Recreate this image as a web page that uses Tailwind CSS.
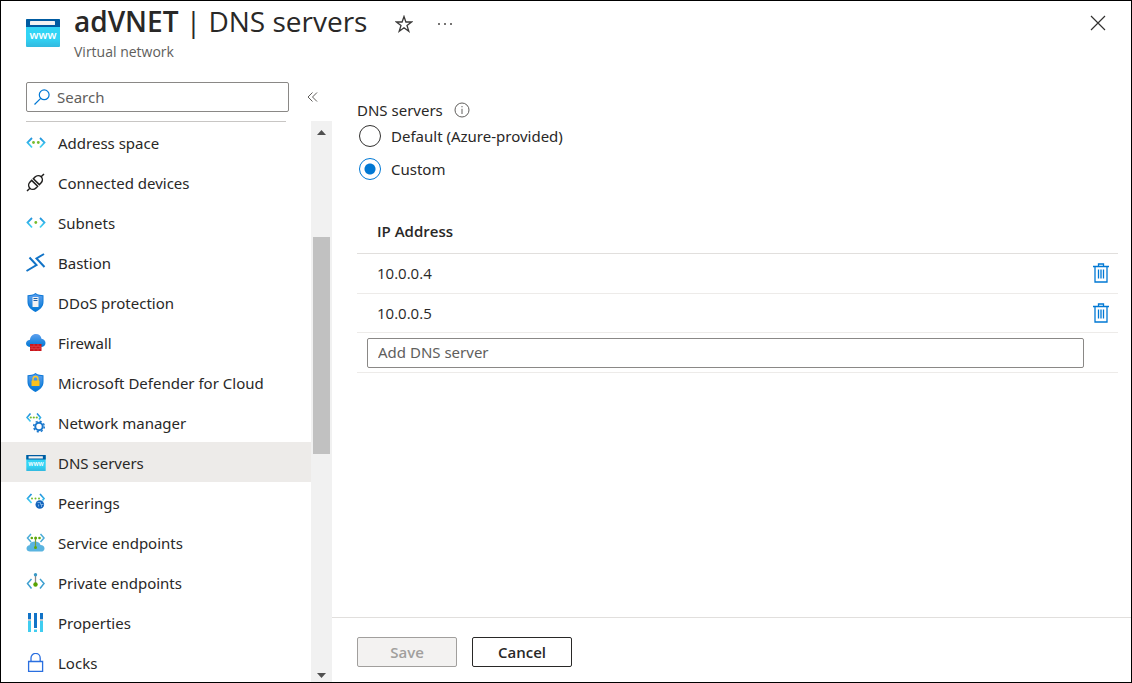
<!DOCTYPE html>
<html lang="en">
<head>
<meta charset="utf-8">
<meta name="viewport" content="width=device-width, initial-scale=1">
<title>adVNET | DNS servers</title>
<script src="https://cdn.jsdelivr.net/npm/@tailwindcss/browser@4"></script>
</head>
<body class="flex h-screen flex-col overflow-hidden border border-black bg-white font-['Noto_Sans','Open_Sans',sans-serif] text-[15px] leading-5 text-[#292827]">
<svg class="absolute size-0" aria-hidden="true">
  <defs>
    <linearGradient id="cy" gradientUnits="userSpaceOnUse" x1="0" y1="3" x2="0" y2="16"><stop offset="0" stop-color="#1b86d8"/><stop offset="1" stop-color="#4be0f8"/></linearGradient>
    <linearGradient id="cySmall" gradientUnits="userSpaceOnUse" x1="0" y1="0" x2="0" y2="11"><stop offset="0" stop-color="#1b86d8"/><stop offset="1" stop-color="#4be0f8"/></linearGradient>
    <linearGradient id="page" x1="0" y1="0" x2="0" y2="1"><stop offset="0" stop-color="#32d4f5"/><stop offset=".7" stop-color="#32d4f5"/><stop offset="1" stop-color="#32b9df"/></linearGradient>
    <linearGradient id="bl" x1="0" y1="0" x2="0" y2="1"><stop offset="0" stop-color="#5ea0ef"/><stop offset="1" stop-color="#0078d4"/></linearGradient>
    <symbol id="www" viewBox="0 0 34 28">
      <rect width="34" height="28" rx="1" fill="url(#page)"/>
      <path d="M1 0h32a1 1 0 0 1 1 1v7H0V1a1 1 0 0 1 1-1z" fill="#005ba1"/>
      <rect x="4" y="2" width="25" height="4" rx=".5" fill="#f2f2f2"/>
      <text x="17" y="20" text-anchor="middle" font-family="Open Sans, sans-serif" font-size="11" font-weight="600" fill="#fff">www</text>
    </symbol>
    <symbol id="trash" viewBox="0 0 16 20">
      <path d="M0 3.500h16M5.500 3V1h5v2M2 4v15h12V4M5.500 6.500v9M8 6.500v9M10.500 6.500v9" fill="none" stroke="#0078d4" stroke-width="1.300"/>
    </symbol>
  </defs>
</svg>

<header class="flex h-[81px] shrink-0 items-start pl-[25px] pr-[25px]">
  <svg class="mt-[18px] h-7 w-[34px] shrink-0" aria-hidden="true"><use href="#www"/></svg>
  <div class="ml-[14px]">
    <h1 class="pt-[2px] font-['Open_Sans',sans-serif] text-[28px] leading-9 whitespace-nowrap"><span class="font-semibold">adVNET</span> | DNS servers</h1>
    <p class="mt-[3px] font-['Open_Sans',sans-serif] text-sm leading-5 text-[#605e5c]">Virtual network</p>
  </div>
  <button class="mt-[14px] ml-7" aria-label="Add to favorites">
    <svg class="size-[18px]" viewBox="0 0 18 18" fill="none" stroke="#3b3a39" stroke-width="1.300"><path d="M9 1.500l1.900 5.500h5.700l-4.600 3.500 1.800 5.700L9 12.700l-4.800 3.500L6 10.500 1.400 7h5.700z"/></svg>
  </button>
  <button class="mt-[14px] ml-6" aria-label="More actions">
    <svg class="h-[18px] w-4" viewBox="0 0 16 18" fill="#484644"><circle cx="2" cy="9" r="1"/><circle cx="8" cy="9" r="1"/><circle cx="14" cy="9" r="1"/></svg>
  </button>
  <button class="mt-[14px] ml-auto" aria-label="Close">
    <svg class="size-4" viewBox="0 0 16 16" fill="none" stroke="#323130" stroke-width="1.200"><path d="M1 1l14 14M15 1L1 15"/></svg>
  </button>
</header>

<div class="flex min-h-0 flex-1">
  <aside class="flex w-[331px] shrink-0 flex-col">
    <div class="flex items-center pl-[25px]">
      <label class="flex h-[30px] w-[263px] items-center rounded-xs border border-[#8a8886] pl-[7px]">
        <svg class="size-4 shrink-0" viewBox="0 0 16 16" fill="none" stroke="#0078d4" stroke-width="1.200" aria-hidden="true"><circle cx="10.200" cy="5.800" r="4.900"/><path d="M6.700 9.300L.5 15.500"/></svg>
        <input type="search" aria-label="Search" placeholder="Search" class="ml-[7px] min-w-0 flex-1 outline-none placeholder:text-[#605e5c]">
      </label>
      <button class="ml-[18px]" aria-label="Collapse menu">
        <svg class="h-3 w-[11px]" viewBox="0 0 11 12" fill="none" stroke="#605e5c"><path d="M5.500 1.500L1 6l4.500 4.500M10 1.500L5.500 6l4.500 4.500"/></svg>
      </button>
    </div>
    <div class="flex min-h-0 flex-1 pt-[9px]">
      <nav class="min-w-0 flex-1 overflow-hidden">
        <div class="mr-[25px] ml-[25px] h-px bg-[#c8c6c4]"></div>
        <a href="#" class="flex h-10 items-center gap-3 pt-px pl-[25px]">
          <svg class="size-5 shrink-0" viewBox="0 0 20 20" fill="none"><path d="M6 5L1.500 9.500 6 14.500M14 5l4.500 4.500-4.500 5" stroke="url(#cy)" stroke-width="1.800"/><g fill="#76bc2d"><circle cx="7.500" cy="9.500" r="1.400"/><circle cx="12.300" cy="9.500" r="1.400"/></g></svg>
          Address space</a>
        <a href="#" class="flex h-10 items-center gap-3 pt-px pl-[25px]">
          <svg class="size-5 shrink-0" viewBox="0 0 20 20" fill="none" stroke="#201f1e" stroke-width="1.500"><path transform="rotate(-45 9.500 9.500)" d="M-2.500 9.500H1.500M17.500 9.500h4M8.300 5.300v8.400H6a4.500 4.200 0 0 1 0-8.400zM10.700 5.300v8.400H13a4.500 4.200 0 0 0 0-8.400z"/></svg>
          Connected devices</a>
        <a href="#" class="flex h-10 items-center gap-3 pt-px pl-[25px]">
          <svg class="size-5 shrink-0" viewBox="0 0 20 20" fill="none"><path d="M6 5L1.500 9.500 6 14.500M14 5l4.500 4.500-4.500 5" stroke="url(#cy)" stroke-width="1.800"/><circle cx="9.800" cy="9.500" r="1.400" fill="#76bc2d"/></svg>
          Subnets</a>
        <a href="#" class="flex h-10 items-center gap-3 pt-px pl-[25px]">
          <svg class="size-5 shrink-0" viewBox="0 0 20 20" fill="none" stroke="#1173c7" stroke-width="2"><path d="M18 1L10.500 5.500l8 8.500"/><path d="M3.500 4.500l7 7.500-10 6"/></svg>
          Bastion</a>
        <a href="#" class="flex h-10 items-center gap-3 pt-px pl-[25px]">
          <svg class="size-5 shrink-0" viewBox="0 0 20 20"><path d="M9.500 0C7 2 4 2 1.500 2.200V9c0 5 4 8 8 10 4-2 8-5 8-10V2.200C15 2 12 2 9.500 0z" fill="#0f7ad8"/><path d="M9.500 1.300C7 3 4.500 3 2.500 3.200V9c0 4 3.500 7 7 8.800 3.500-1.800 7-4.800 7-8.800V3.200C14.500 3 12 3 9.500 1.300z" fill="url(#bl)"/><rect x="6.500" y="4" width="6" height="10" rx=".5" fill="#f2f2f2"/><path d="M7.500 5.500h4M7.500 7.500h4" stroke="#1b5fa8"/></svg>
          DDoS protection</a>
        <a href="#" class="flex h-10 items-center gap-3 pt-px pl-[25px]">
          <svg class="size-5 shrink-0" viewBox="0 0 20 20"><path d="M4.500 14C2 14 0 12.500 0 10.500c0-2 1.500-3.500 4-3.800C4.300 3.500 6.500 1 10 1c3 0 5 2 5.500 4.700 2.500.3 4 2 4 4.300 0 2.500-2 4-4.500 4z" fill="url(#bl)"/><rect x="4" y="11" width="11.500" height="7" fill="#c9151b"/><path d="M4 13.300h11.500M4 15.700h11.500M8 11v2.300M12 11v2.300M6 13.300v2.400M10 13.300v2.400M14 13.300v2.400M8 15.700V18M12 15.700V18" stroke="#f06a6a" stroke-width=".4"/></svg>
          Firewall</a>
        <a href="#" class="flex h-10 items-center gap-3 pt-px pl-[25px]">
          <svg class="size-5 shrink-0" viewBox="0 0 20 20"><path d="M9.500 0C7 2 4 2 1.500 2.200V9c0 5 4 8 8 10 4-2 8-5 8-10V2.200C15 2 12 2 9.500 0z" fill="#0f7ad8"/><path d="M9.500 1.300C7 3 4.500 3 2.500 3.200V9c0 4 3.500 7 7 8.800 3.500-1.800 7-4.800 7-8.800V3.200C14.500 3 12 3 9.500 1.300z" fill="url(#bl)"/><path d="M7 8V6a2.500 2.500 0 0 1 5 0v2" fill="none" stroke="#ffca28" stroke-width="1.300"/><rect x="5.500" y="7.500" width="8" height="5.500" rx=".6" fill="#fbc21d"/></svg>
          Microsoft Defender for Cloud</a>
        <a href="#" class="flex h-10 items-center gap-3 pt-px pl-[25px]">
          <svg class="size-5 shrink-0" viewBox="0 0 20 20" fill="none"><path d="M4.500.5L1 4.500l3.500 4M11 .5l3.500 4L13 6.500" stroke="url(#cySmall)" stroke-width="1.600"/><g fill="#76bc2d"><circle cx="4.800" cy="4.500" r="1.100"/><circle cx="7.800" cy="4.500" r="1.100"/><circle cx="10.800" cy="4.500" r="1.100"/></g><circle cx="13" cy="13.500" r="3.700" stroke="#1b78cd" stroke-width="2"/><circle cx="13" cy="13.500" r="5.300" stroke="#1b78cd" stroke-width="1.500" stroke-dasharray="2.100 2.063"/></svg>
          Network manager</a>
        <a href="#" aria-current="page" class="flex h-10 items-center gap-3 bg-[#edebe9] pt-px pl-[25px]">
          <svg class="h-4 w-5 shrink-0" aria-hidden="true"><use href="#www"/></svg>
          DNS servers</a>
        <a href="#" class="flex h-10 items-center gap-3 pt-px pl-[25px]">
          <svg class="size-5 shrink-0" viewBox="0 0 20 20" fill="none"><path d="M5.500 1L1.500 5.500l4 4.500M14 1l4 4.500-1.500 2" stroke="url(#cySmall)" stroke-width="1.700"/><g fill="#76bc2d"><circle cx="6" cy="5.500" r="1"/><circle cx="9.500" cy="5.500" r="1"/><circle cx="13" cy="5.500" r="1"/></g><circle cx="13.800" cy="11.500" r="4.300" fill="#1465bd"/><path d="M11.500 9.500h3v2h3M12.500 13.500v-2M15.500 14v-2.500" stroke="#9cc8f2" stroke-width=".7"/></svg>
          Peerings</a>
        <a href="#" class="flex h-10 items-center gap-3 pt-px pl-[25px]">
          <svg class="size-5 shrink-0" viewBox="0 0 20 20" fill="none"><path d="M4 18.500c-2 0-3.500-1.300-3.500-3s1.300-3 3-3.200C4 9.500 6 8.500 9 8.500c3 0 5 1.200 5.500 3.500 2.500.2 4 1.500 4 3.400s-1.500 3.100-3.500 3.100z" fill="#5ab4e0"/><path d="M5 1L1.500 5 5 9M14.500 1L18 5l-3.500 4" stroke="#4bacd8" stroke-width="1.500"/><path d="M9.500 5.500v10" stroke="#7a9a3a" stroke-width="1.200"/><g fill="#5ea80b"><circle cx="5.800" cy="5" r="1.300"/><circle cx="9.600" cy="5" r="1.500"/><circle cx="13.500" cy="5" r="1.300"/><circle cx="9.500" cy="14.500" r="1.500"/></g></svg>
          Service endpoints</a>
        <a href="#" class="flex h-10 items-center gap-3 pt-px pl-[25px]">
          <svg class="size-5 shrink-0" viewBox="0 0 20 20" fill="none"><path d="M5.500 6L1.500 10.500l4 5M14 6l4 4.500-4 5" stroke="#3d9fd0" stroke-width="1.500"/><path d="M9.500 2v9" stroke="#8a8886" stroke-width="1.300"/><circle cx="9.500" cy="1.800" r="1.700" fill="#3999c6"/><circle cx="9.500" cy="11.500" r="2.200" fill="#57a300"/></svg>
          Private endpoints</a>
        <a href="#" class="flex h-10 items-center gap-3 pt-px pl-[25px]">
          <svg class="size-5 shrink-0" viewBox="0 0 20 20"><path d="M2 0h3v6H2zM8 0h3v15H8zM14 0h3v6h-3z" fill="#1173c7"/><path d="M2 8h3v11H2zM8 16.500h3V19H8zM14 8h3v11h-3z" fill="#40cdf0"/><path d="M2 6h3v2H2zM14 6h3v2h-3z" fill="#b9c6d2"/></svg>
          Properties</a>
        <a href="#" class="flex h-10 items-center gap-3 pt-px pl-[25px]">
          <svg class="size-5 shrink-0" viewBox="0 0 20 20" fill="none" stroke="#2a6fe0" stroke-width="1.300"><path d="M2.600 8.500h14v9.800h-14zM5 8.500V5a4.600 4.600 0 0 1 9.200 0v3.500"/></svg>
          Locks</a>
      </nav>
      <div class="flex w-[21px] shrink-0 flex-col items-center justify-between bg-[#f1f1f1] pt-[9px] pb-1" aria-hidden="true">
        <svg class="h-[5px] w-[9px] shrink-0" viewBox="0 0 9 5" fill="#505050"><path d="M0 5L4.500 0 9 5z"/></svg>
        <div class="flex w-full flex-1 flex-col items-center">
          <div class="flex-[102]"></div>
          <div class="w-[17px] flex-[216] bg-[#c1c1c1]"></div>
          <div class="flex-[219]"></div>
        </div>
        <svg class="h-[5px] w-[9px] shrink-0" viewBox="0 0 9 5" fill="#505050"><path d="M0 0h9L4.500 5z"/></svg>
      </div>
    </div>
  </aside>

  <main class="flex min-w-0 flex-1 flex-col">
    <form class="flex min-h-0 flex-1 flex-col">
      <div class="min-h-0 flex-1 pt-[18px] pr-[13px] pl-[25px]">
        <fieldset>
          <legend class="flex items-center gap-[11px]">DNS servers
            <svg class="size-4" viewBox="0 0 16 16" fill="none" stroke="#605e5c"><circle cx="8" cy="8" r="7"/><path d="M8 6.800V12M8 4v1.300"/></svg>
          </legend>
          <label class="mt-[5px] flex h-[22px] items-center gap-[10px] pl-[2px]"><input type="radio" name="dns" class="size-[22px] appearance-none rounded-full border border-[#323130] checked:border-[#0078d4] checked:bg-[radial-gradient(circle,#0078d4_5px,transparent_6px)]">Default (Azure-provided)</label>
          <label class="mt-[11px] flex h-[22px] items-center gap-[10px] pl-[2px]"><input type="radio" name="dns" checked class="size-[22px] appearance-none rounded-full border border-[#323130] checked:border-[#0078d4] checked:bg-[radial-gradient(circle,#0078d4_5px,transparent_6px)]">Custom</label>
        </fieldset>
        <table class="mt-[30px] w-full border-collapse">
          <thead>
            <tr class="h-[43px] border-b border-[#e1dfdd]"><th scope="col" class="pl-5 text-left font-['Open_Sans',sans-serif] font-semibold">IP Address</th><td class="w-[34px]"></td></tr>
          </thead>
          <tbody>
            <tr class="h-10 border-b border-[#edebe9]"><td class="pl-5 font-['Open_Sans',sans-serif]">10.0.0.4</td><td><button type="button" class="mx-auto block" aria-label="Delete 10.0.0.4"><svg class="h-5 w-4"><use href="#trash"/></svg></button></td></tr>
            <tr class="h-[39px] border-b border-[#edebe9]"><td class="pl-5 font-['Open_Sans',sans-serif]">10.0.0.5</td><td><button type="button" class="mx-auto block" aria-label="Delete 10.0.0.5"><svg class="h-5 w-4"><use href="#trash"/></svg></button></td></tr>
            <tr class="h-10 border-b border-[#edebe9]"><td class="pt-px pl-[10px]"><input type="text" aria-label="Add DNS server" placeholder="Add DNS server" class="block h-[30px] w-full rounded-xs border border-[#8a8886] px-[10px] pb-px outline-none placeholder:text-[#605e5c]"></td><td></td></tr>
          </tbody>
        </table>
      </div>
      <div class="flex h-[65px] shrink-0 items-start gap-[15px] border-t border-[#e1dfdd] pt-[19px] pl-[25px]">
        <button type="submit" disabled class="h-[30px] w-[100px] rounded-xs border border-[#a19f9d] bg-[#f3f2f1] pb-px font-['Open_Sans',sans-serif] font-semibold text-[#a19f9d]">Save</button>
        <button type="button" class="h-[30px] w-[100px] rounded-xs border border-[#292827] bg-white pb-px font-['Open_Sans',sans-serif] font-semibold">Cancel</button>
      </div>
    </form>
  </main>
</div>
</body>
</html>
